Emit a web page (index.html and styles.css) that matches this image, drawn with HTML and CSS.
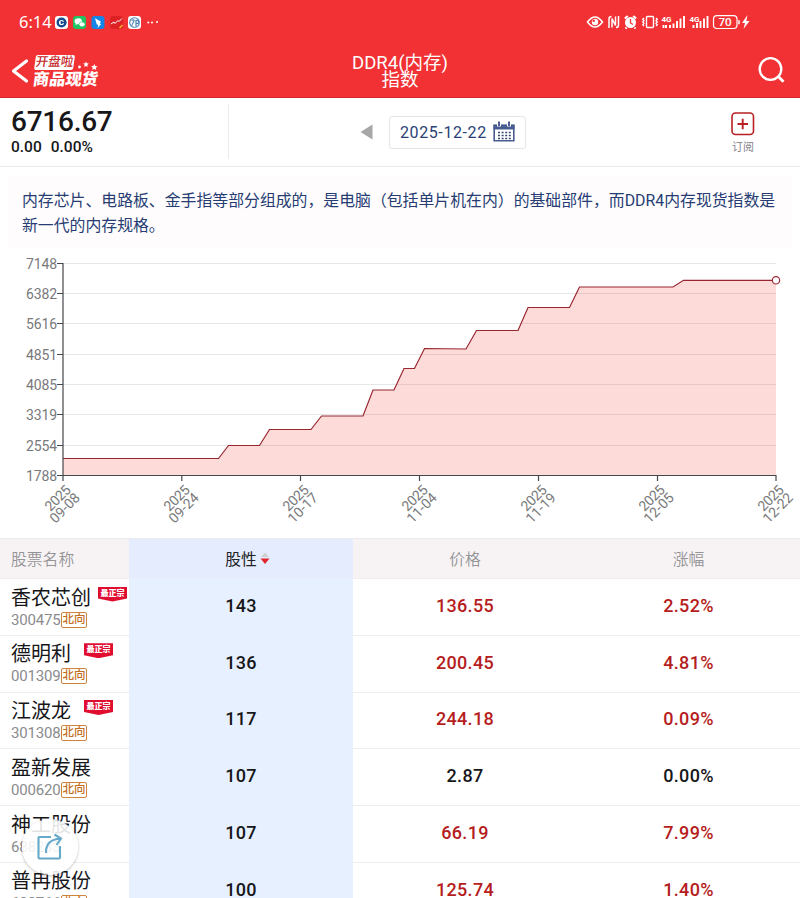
FILE: index.html
```html
<!DOCTYPE html>
<html lang="zh-CN">
<head>
    <meta charset="UTF-8">
    <title>DDR4(内存)指数</title>
    <link rel="stylesheet" href="styles.css">
</head>
<body>
    <header class="header">
        <div class="status">
            <span class="clock">6:14</span>
            <svg class="apps" width="100" height="16" viewBox="0 0 100 16">
                <rect x="1" y="2" width="13" height="13" rx="3" fill="#fff"/>
                <circle cx="7.5" cy="8.5" r="3.8" fill="none" stroke="#164a8c" stroke-width="2.4"/>
                <path d="M7.5 8.5h5M7.5 7v3" stroke="#164a8c" stroke-width="1.6"/>
                <rect x="19" y="2" width="13" height="13" rx="3" fill="#20c463"/>
                <ellipse cx="24.3" cy="7.3" rx="3.7" ry="3" fill="#fff"/>
                <ellipse cx="28" cy="10.3" rx="3" ry="2.4" fill="#fff" stroke="#20c463" stroke-width=".6"/>
                <path d="M22 9l-.5 2.2 2-1.2z" fill="#fff"/>
                <rect x="37.500" y="2" width="13" height="13" rx="3" fill="#1685e8"/>
                <path d="M41 4.200l5.800 3.300-.8 2.500h1.200L43.500 14l.8-3.200-1.500-.3z" fill="#fff"/>
                <rect x="56" y="2" width="13" height="13" rx="3" fill="#dc2023"/>
                <path d="M57 10l3-2 1 1.500 3-3 1 1 3-3" fill="none" stroke="#fff" stroke-width="1"/>
                <path d="M65.500 14l3-3" stroke="#f7b52c" stroke-width="1.600"/>
                <rect x="74" y="2" width="13" height="13" rx="3" fill="#fff"/>
                <circle cx="80.500" cy="8.500" r="4.800" fill="none" stroke="#4b82b5" stroke-width="1.100"/>
                <path d="M77.500 6.500q4-2 2 1.500t-1.500 4M82 12V6.500q4-1 2 3h-2" fill="none" stroke="#4b82b5" stroke-width="1.200"/>
                <g fill="#fff">
                    <circle cx="94.300" cy="8.500" r="1"/><circle cx="98" cy="8.500" r="1"/>
                </g>
            </svg>
            <span class="more"></span>
            <svg class="system" width="166" height="18" viewBox="0 0 166 18" fill="none" stroke="#fff">
                <path d="M1.500 9Q9-1 16.500 9 9 19 1.500 9z" stroke-width="1.500"/>
                <circle cx="9" cy="9" r="3.200" fill="#fff" stroke="none"/>
                <circle cx="7.700" cy="7.700" r="1.200" fill="#f13134" stroke="none"/>
                <path d="M23 15V6q0-2.500 2.500-2.500M32.500 3v9q0 2.500-2.500 2.500M26 14.500V5.500l3.500 7V3.500" stroke-width="1.500"/>
                <circle cx="44.500" cy="9.500" r="5.500" fill="#fff" stroke="none"/>
                <path d="M38.800 5.500l3-2.600M50.200 5.500l-3-2.600M40.500 14.500l-1 1.200M48.500 14.500l1 1.200" stroke-width="2"/>
                <path d="M44.500 6v4l2.500 1.500" stroke="#f13134" stroke-width="1.300"/>
                <rect x="60.500" y="3.500" width="7" height="11" rx="1" stroke-width="1.400"/>
                <path d="M58 5l-1.300 1.300L58 7.700 56.700 9 58 10.300l-1.300 1.400L58 13M70 5l1.300 1.300L70 7.700 71.300 9 70 10.300l1.300 1.400L70 13" stroke-width="1.300"/>
                <path d="M77.500 15v-3M80 15v-3M84 15v-3M87.500 15v-4.500M91 15V8M94.500 15V5.500M98 15V3" stroke-width="1.900"/>
                <path d="M107.500 15v-3M111 15v-5M114.500 15V8M118 15V5.500M121.500 15V3" stroke-width="1.900"/>
                <g fill="#fff" stroke="none" class="net">
                    <text x="75.500" y="9" textLength="10">4G</text>
                    <text x="103.500" y="9" textLength="10">4G</text>
                </g>
                <rect x="127.500" y="2.700" width="23.500" height="12.800" rx="3.500" stroke-width="1.200"/>
                <path d="M153 7.200v4" stroke-width="1.500"/>
                <text x="139" y="13.200" text-anchor="middle" fill="#fff" stroke="none" class="battery">70</text>
                <path d="M161.500 2l-5.500 8h3l-1.500 6 6-8h-3.200z" fill="#fff" stroke="none"/>
            </svg>
        </div>
        <div class="nav">
            <div class="brand">
                <svg width="18" height="26" viewBox="0 0 18 26"><path d="M15.500 3L2.500 13l13 10" fill="none" stroke="#fff" stroke-width="3.200" stroke-linecap="round" stroke-linejoin="round"/></svg>
                <div class="logo">
                    <div class="logo-top">
                        <span class="logo-box">开盘啦</span>
                        <svg width="22" height="17" viewBox="0 0 22 17" fill="#fff">
                            <circle cx="2.500" cy="12" r="1.400"/>
                            <path d="M9 6.500l.8 1.800 2 .2-1.500 1.400.4 2-1.700-1-1.700 1 .4-2-1.500-1.400 2-.2z"/>
                            <path d="M17.300 9l1 2 2.200.3-1.600 1.500.4 2.200-2-1-2 1 .4-2.200-1.600-1.500 2.200-.3z"/>
                        </svg>
                    </div>
                    <span class="logo-name">商品现货</span>
                </div>
            </div>
            <h1><span>DDR4(内存)</span><span>指数</span></h1>
            <svg class="search" width="28" height="28" viewBox="0 0 28 28" fill="none" stroke="#fff" stroke-width="2.300"><circle cx="12.500" cy="13" r="10.800"/><path d="M20.300 20.500l5.200 5.200" stroke-width="2.800"/></svg>
        </div>
    </header>

    <section class="quote">
        <div class="price">
            <strong>6716.67</strong>
            <div class="change"><span>0.00</span><span>0.00%</span></div>
        </div>
        <div class="date">
            <svg width="13" height="16" viewBox="0 0 13 16"><path d="M12.500.500v15L.500 8z" fill="#a7a7a7"/></svg>
            <div class="date-box">
                <span>2025-12-22</span>
                <svg width="22" height="22" viewBox="0 0 22 22">
                    <path d="M1.200 4.500h19.600v15.300H1.200z" fill="#fff" stroke="#495c91" stroke-width="1.600"/>
                    <path d="M.500 3.500h21v5H.500z" fill="#495c91"/>
                    <path d="M6 1v4.500M16 1v4.500" stroke="#fff" stroke-width="4"/>
                    <path d="M6 .500v4.500M16 .500v4.500" stroke="#495c91" stroke-width="2"/>
                    <path d="M5 11.500h13M5 14.500h13M5 17.500h13" stroke="#35466f" stroke-width="1.600" stroke-dasharray="2 1.600"/>
                </svg>
            </div>
        </div>
        <div class="subscribe">
            <svg width="24" height="24" viewBox="0 0 24 24" fill="none" stroke="#b92024"><rect x="1" y="1" width="21.500" height="21.500" rx="3.500" stroke-width="1.600"/><path d="M6.500 12h10.500M11.700 6.700v10.500" stroke-width="1.900"/></svg>
            <span>订阅</span>
        </div>
    </section>

    <p class="intro"><span>内存芯片、电路板、金手指等部分组成的，是电脑（包括单片机在内）的基础部件，而DDR4内存现货指数是</span><br>新一代的内存规格。</p>

    <svg class="chart" width="800" height="290" viewBox="0 248 800 290">
        <path class="grid" d="M63 263.500H776M63 293.500H776M63 323.500H776M63 354.500H776M63 384.500H776M63 414.500H776M63 445.500H776"/>
        <path class="area" d="M63 458.500H218.500L228.500 445.500H259.500L269.500 429.500H311L321.500 416H363L373 390H394L404 368.500H414.500L424.500 348.500L466 349L476.500 330.500H518L528 307.500H569.500L579.500 287H673L683.500 280.300H776V475H63z"/>
        <path class="line" d="M63 458.500H218.500L228.500 445.500H259.500L269.500 429.500H311L321.500 416H363L373 390H394L404 368.500H414.500L424.500 348.500L466 349L476.500 330.500H518L528 307.500H569.500L579.500 287H673L683.500 280.300H776"/>
        <path class="axis" d="M63 263V481M57 263.500H63M57 293.500H63M57 323.500H63M57 354.500H63M57 384.500H63M57 414.500H63M57 445.500H63M57 475.500H776.500M181.800 475V481M300.500 475V481M419.500 475V481M538.500 475V481M657.500 475V481M776 475V481"/>
        <circle cx="776" cy="280.300" r="3.700" fill="#fff" stroke="#a32b35" stroke-width="1.200"/>
        <g class="y-labels">
            <text x="26" y="268.800" textLength="31">7148</text>
            <text x="26" y="299" textLength="31">6382</text>
            <text x="26" y="329.300" textLength="31">5616</text>
            <text x="26" y="359.600" textLength="31">4851</text>
            <text x="26" y="389.900" textLength="31">4085</text>
            <text x="26" y="420.100" textLength="31">3319</text>
            <text x="26" y="450.500" textLength="31">2554</text>
            <text x="26" y="481.200" textLength="31">1788</text>
        </g>
        <g class="x-labels">
            <g transform="translate(59 488) rotate(-45)"><text x="-23" y="11" textLength="30">2025</text><text x="-28" y="23" textLength="36">09-08</text></g>
            <g transform="translate(178 488) rotate(-45)"><text x="-23" y="11" textLength="30">2025</text><text x="-28" y="23" textLength="36">09-24</text></g>
            <g transform="translate(297 488) rotate(-45)"><text x="-23" y="11" textLength="30">2025</text><text x="-28" y="23" textLength="36">10-17</text></g>
            <g transform="translate(416 488) rotate(-45)"><text x="-23" y="11" textLength="30">2025</text><text x="-28" y="23" textLength="36">11-04</text></g>
            <g transform="translate(535 488) rotate(-45)"><text x="-23" y="11" textLength="30">2025</text><text x="-28" y="23" textLength="36">11-19</text></g>
            <g transform="translate(653 488) rotate(-45)"><text x="-23" y="11" textLength="30">2025</text><text x="-28" y="23" textLength="36">12-05</text></g>
            <g transform="translate(772 488) rotate(-45)"><text x="-23" y="11" textLength="30">2025</text><text x="-28" y="23" textLength="36">12-22</text></g>
        </g>
    </svg>

    <main class="stocks">
        <div class="row head">
            <div class="name">股票名称</div>
            <div class="nature">股性<svg width="10" height="14" viewBox="0 0 10 14"><path d="M1 6l4-4.500L9 6z" fill="#cfcfd3"/><path d="M.500 7.500h9L5 13z" fill="#e0252b"/></svg></div>
            <div>价格</div>
            <div>涨幅</div>
        </div>
        <div class="row">
            <div class="name"><div class="title">香农芯创<span class="badge">最正宗</span></div><div class="code"><span>300475</span><b>北向</b></div></div>
            <div class="nature">143</div>
            <div class="up">136.55</div>
            <div class="up">2.52%</div>
        </div>
        <div class="row">
            <div class="name"><div class="title">德明利<span class="badge gap">最正宗</span></div><div class="code"><span>001309</span><b>北向</b></div></div>
            <div class="nature">136</div>
            <div class="up">200.45</div>
            <div class="up">4.81%</div>
        </div>
        <div class="row">
            <div class="name"><div class="title">江波龙<span class="badge gap">最正宗</span></div><div class="code"><span>301308</span><b>北向</b></div></div>
            <div class="nature">117</div>
            <div class="up">244.18</div>
            <div class="up">0.09%</div>
        </div>
        <div class="row">
            <div class="name"><div class="title">盈新发展</div><div class="code"><span>000620</span><b>北向</b></div></div>
            <div class="nature">107</div>
            <div>2.87</div>
            <div>0.00%</div>
        </div>
        <div class="row">
            <div class="name"><div class="title">神工股份</div><div class="code"><span>688233</span></div></div>
            <div class="nature">107</div>
            <div class="up">66.19</div>
            <div class="up">7.99%</div>
        </div>
        <div class="row">
            <div class="name"><div class="title">普冉股份</div><div class="code"><span>688766</span><b>北向</b></div></div>
            <div class="nature">100</div>
            <div class="up">125.74</div>
            <div class="up">1.40%</div>
        </div>
    </main>

    <div class="share">
        <svg width="28" height="28" viewBox="0 0 28 28" fill="none" stroke="#65a9cb" stroke-width="2.100"><path d="M15 4H3.500Q2.500 4 2.500 5V24.500Q2.500 25.500 3.500 25.500H23Q24 25.500 24 24.500V13"/><path d="M10 20Q9.500 6.500 24.500 5.500M18.500 1.500l6.500 4-4.500 6.500"/></svg>
    </div>
</body>
</html>
```
FILE: styles.css
```css
* {
    box-sizing: border-box;
}

body {
    margin: 0;
    width: 800px;
    height: 898px;
    overflow: hidden;
    background: #fff;
    color: #17171a;
    font-family: Roboto, "Noto Sans CJK SC", sans-serif;
}

svg {
    display: block;
    flex-shrink: 0;
}

/* header */
.header {
    height: 98px;
    background: #f13134;
    border-bottom: 1px solid #d92a2d;
    color: #fff;
}

.status {
    display: flex;
    align-items: center;
    height: 42px;
    padding: 2px 48px 0 19px;
}

.clock {
    width: 35px;
    font-family: "Noto Sans", sans-serif;
    font-size: 16.5px;
    line-height: 20px;
}

.more {
    width: 2px;
    height: 2px;
    margin-left: 2px;
    border-radius: 50%;
    background: #fff;
}

.system {
    margin-left: auto;
}

.net {
    font-size: 8px;
    font-weight: 700;
}

.battery {
    font-family: "Open Sans", sans-serif;
    font-size: 11.5px;
    font-weight: 600;
}

.nav {
    display: grid;
    grid-template-columns: 1fr 200px 1fr;
    align-items: center;
    height: 56px;
}

.brand {
    display: flex;
    align-items: center;
    gap: 3px;
    padding: 2px 0 0 11px;
}

.logo-top {
    display: flex;
    gap: 3px;
    height: 15px;
    padding-left: 3px;
}

.logo-box {
    width: 39px;
    height: 15px;
    border-radius: 2px;
    background: #fff;
    color: #c5272b;
    font-size: 12.5px;
    font-weight: 500;
    line-height: 14px;
    text-align: center;
    white-space: nowrap;
    transform: skewX(-8deg);
}

.logo-name {
    display: block;
    margin: 2px 0 0 1px;
    font-size: 16.3px;
    font-weight: 900;
    line-height: 15px;
    transform: skewX(-8deg);
}

h1 {
    display: flex;
    flex-direction: column;
    align-items: center;
    margin: 3px 0 0;
    font-size: 18.5px;
    font-weight: 400;
    line-height: 17px;
}

.search {
    justify-self: end;
    margin-right: 14px;
}

/* index value, date, subscribe */
.quote {
    display: flex;
    height: 69px;
    border-bottom: 1px solid #ebebed;
}

.price {
    width: 229px;
    height: 55px;
    margin-top: 6px;
    padding-left: 11px;
    border-right: 1px solid #ebebed;
}

.price strong {
    display: block;
    font-size: 28px;
    font-weight: 500;
    letter-spacing: -0.25px;
    line-height: 35px;
}

.change {
    display: flex;
    gap: 9px;
    font-size: 15.5px;
    font-weight: 500;
    line-height: 16px;
}

.date {
    display: flex;
    align-items: center;
    gap: 16px;
    margin-left: 131px;
}

.date-box {
    display: flex;
    align-items: center;
    gap: 5px;
    width: 137px;
    height: 33px;
    padding-left: 10px;
    border: 1px solid #e4e5e9;
    border-radius: 3px;
    color: #2b3f75;
    font-size: 16px;
    letter-spacing: 0.6px;
}

.date-box span {
    width: 88px;
    white-space: nowrap;
}

.subscribe {
    display: flex;
    flex-direction: column;
    align-items: center;
    gap: 4px;
    width: 24px;
    margin-left: 205px;
    padding-top: 14px;
    color: #858588;
    font-size: 11px;
    line-height: 16px;
    white-space: nowrap;
}

.intro {
    height: 73px;
    margin: 8px 8px 0;
    padding: 13px 14px;
    background: #fefcfd;
    color: #263c73;
    font-size: 15.86px;
    line-height: 25px;
    white-space: nowrap;
}

/* chart */
.grid,
.line,
.axis {
    fill: none;
}

.grid {
    stroke: #e6e6e8;
}

.area {
    fill: rgba(248, 92, 78, 0.22);
}

.line {
    stroke: #982630;
    stroke-width: 1.2;
}

.axis {
    stroke: #47464a;
    stroke-width: 1.2;
}

.y-labels,
.x-labels {
    fill: #79797c;
    font-size: 14px;
    font-weight: 400;
}

/* stocks */
.stocks {
    border-top: 1px solid #ebebed;
}

.row {
    display: grid;
    grid-template-columns: 129px 224px 224px 223px;
    height: 56.8px;
    font-size: 18px;
    font-weight: 500;
    letter-spacing: 0.3px;
}

.row > div {
    display: flex;
    align-items: center;
    justify-content: center;
    border-bottom: 1px solid #ededef;
    padding-bottom: 3px;
}

.row > .nature {
    background: #e6f0fe;
    border-color: #e9eff9;
}

.row > .name {
    flex-direction: column;
    align-items: flex-start;
    justify-content: flex-start;
    padding: 6.5px 0 0 11px;
    font-weight: 400;
    letter-spacing: 0;
}

.row > .up {
    color: #b51d20;
}

.row.head {
    height: 40px;
    background: #f7f3f5;
    color: #949395;
    font-size: 15.8px;
    font-weight: 350;
    letter-spacing: 0;
}

.head > div {
    padding-bottom: 1px;
}

.head > .name {
    justify-content: center;
    padding-top: 0;
    font-weight: 350;
}

.head > .nature {
    gap: 3px;
    padding-left: 13px;
    background: #e4ecfd;
    color: #222226;
    font-weight: 400;
}

.title {
    display: flex;
    gap: 7px;
    font-size: 20px;
    line-height: 25px;
    white-space: nowrap;
}

.badge {
    width: 29px;
    height: 15px;
    margin-top: 1px;
    background: #e10d30;
    clip-path: polygon(0 0, 100% 0, 100% 80%, 50% 100%, 0 80%);
    color: #fff;
    font-size: 8px;
    font-weight: 900;
    line-height: 13px;
    text-align: center;
}

.badge.gap {
    margin-left: 6px;
}

.code {
    display: flex;
    align-items: center;
    color: #8b8b8e;
    font-size: 15px;
    font-weight: 400;
    line-height: 18px;
}

.code span {
    width: 50px;
    letter-spacing: -0.2px;
}

.code b {
    width: 26px;
    height: 16px;
    border: 1px solid #cf8440;
    border-radius: 2px;
    color: #c36d20;
    font-size: 11.5px;
    font-weight: 500;
    line-height: 13px;
    text-align: center;
    white-space: nowrap;
}

/* floats above the list */
.share {
    position: fixed;
    left: 22px;
    top: 819px;
    display: flex;
    align-items: center;
    justify-content: center;
    width: 56px;
    height: 56px;
    border-radius: 50%;
    background: rgba(255, 255, 255, 0.88);
    box-shadow: 0 1px 3px rgba(0, 0, 0, 0.25);
}
```
